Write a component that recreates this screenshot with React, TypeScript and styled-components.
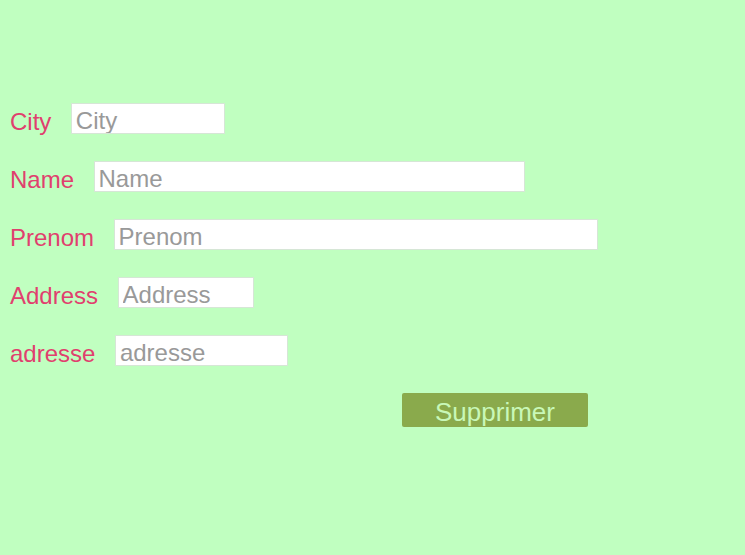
import React from "react";
import styled, { createGlobalStyle } from "styled-components";

const Global = createGlobalStyle`
  html, body { margin: 0; padding: 0; background: #c0ffc0; }
  body { font-family: "Liberation Sans", Arial, sans-serif; }
`;

const Page = styled.form`
  display: flex;
  flex-direction: column;
  gap: 27px;
  padding: 103px 0 0 10px;
  min-height: 555px;
  box-sizing: border-box;
  background: #c0ffc0;
`;

const Row = styled.div`
  display: flex;
  align-items: center;
  height: 31px;
`;

const Label = styled.label`
  color: #e0406e;
  font-size: 24px;
  margin-right: 19.5px;
  line-height: 31px;
  padding-top: 6px;
`;

const Field = styled.input<{ $w: number }>`
  width: ${(p) => p.$w}px;
  height: 31px;
  box-sizing: border-box;
  border: 1px solid #d6e6d6;
  background: #fff;
  padding: 4px 0 0 4px;
  line-height: 27px;
  font-family: "Liberation Sans", Arial, sans-serif;
  font-size: 24px;
  color: #333;
  outline: none;
  &::placeholder { color: #999; }
`;

const ButtonRow = styled.div`
  display: flex;
  padding-left: 392px;
`;

const Button = styled.button`
  width: 186px;
  height: 34px;
  background: #8aaa4c;
  border: none;
  border-radius: 2px;
  color: #c8f8b8;
  font-family: "Liberation Sans", Arial, sans-serif;
  font-size: 26px;
  padding: 4px 0 0;
`;

const fields = [
  { label: "City", w: 154 },
  { label: "Name", w: 431 },
  { label: "Prenom", w: 484 },
  { label: "Address", w: 136 },
  { label: "adresse", w: 173 },
];

export default function App() {
  return (
    <>
      <Global />
      <Page onSubmit={(e) => e.preventDefault()}>
        {fields.map((f) => (
          <Row key={f.label}>
            <Label>{f.label}</Label>
            <Field $w={f.w} placeholder={f.label} />
          </Row>
        ))}
        <ButtonRow>
          <Button type="button">Supprimer</Button>
        </ButtonRow>
      </Page>
    </>
  );
}
